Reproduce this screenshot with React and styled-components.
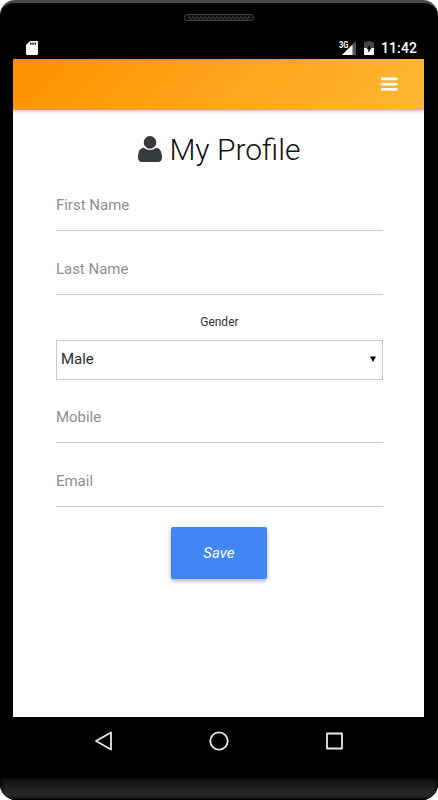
import { useState } from 'react'
import styled, { createGlobalStyle } from 'styled-components'

const GlobalStyle = createGlobalStyle`
  * {
    box-sizing: border-box;
  }
  body {
    margin: 0;
    background: white;
    font-family: Roboto, sans-serif;
  }
`

const Phone = styled.div`
  width: 438px;
  height: 800px;
  display: flex;
  flex-direction: column;
  background: black;
  border-top: 3px solid #4a4a4a;
  border-radius: 15px 15px 16px 16px;
  overflow: hidden;
`

const SpeakerArea = styled.div`
  height: 34px;
  display: flex;
  justify-content: center;
  padding-top: 11px;
`

const StatusBar = styled.div`
  height: 22px;
  display: flex;
  align-items: center;
  justify-content: space-between;
  padding: 0 21px 0 26px;
`

const StatusIcons = styled.div`
  display: flex;
  align-items: center;
  gap: 7px;
`

const Clock = styled.span`
  width: 36px;
  color: white;
  font-size: 14px;
  font-weight: 500;
  line-height: 20px;
  letter-spacing: 0.1px;
  white-space: nowrap;
`

const Screen = styled.div`
  width: 411px;
  height: 658px;
  margin-left: 13.4px;
  background: white;
`

const Header = styled.header`
  height: 51px;
  display: flex;
  align-items: center;
  justify-content: flex-end;
  padding-right: 26px;
  background: linear-gradient(135deg, #ff8f00, #ffb833);
  box-shadow: 0 1px 4px rgba(0, 0, 0, 0.28);
`

const MenuButton = styled.button`
  display: flex;
  padding: 0;
  margin-top: -1px;
  border: 0;
  background: none;
`

const Form = styled.form`
  padding: 20px 41.5px 0 42.5px;
`

const Title = styled.h1`
  display: flex;
  align-items: center;
  justify-content: center;
  gap: 7px;
  height: 40px;
  margin: 0 0 10px;
  color: #111;
  font-size: 30px;
  font-weight: 300;
  line-height: 40px;
  white-space: nowrap;
  svg {
    margin-top: -2px;
  }
`

const Field = styled.input`
  display: block;
  width: 100%;
  height: 51px;
  margin-bottom: ${props => props.$gap || '13px'};
  padding: 0 0 1px;
  border: 0;
  border-bottom: 1px solid #c8c8c8;
  outline: 0;
  background: none;
  color: #222;
  font-family: Roboto, sans-serif;
  font-size: 15px;
  &::placeholder {
    color: #8f8f8f;
  }
`

const Label = styled.label`
  display: block;
  height: 25px;
  color: #333;
  font-size: 12px;
  line-height: 14px;
  text-align: center;
`

const SelectBox = styled.div`
  display: flex;
  align-items: center;
  justify-content: space-between;
  height: 40px;
  margin-bottom: 12px;
  padding: 0 6px 2px 4px;
  border: 1px solid #cbcbcb;
  color: #2c2c2c;
  font-size: 15px;
`

const SaveButton = styled.button`
  display: block;
  width: 96px;
  height: 52px;
  margin: 0 auto 0 115px;
  padding: 0;
  border: 0;
  border-radius: 2px;
  background: #4285f4;
  box-shadow: 0 2px 4px rgba(0, 0, 0, 0.32);
  color: white;
  font-family: Roboto, sans-serif;
  font-size: 15px;
  font-style: italic;
`

const NavBar = styled.nav`
  height: 61px;
  display: flex;
  justify-content: center;
  gap: 91px;
  padding-top: 12px;
`

const Chin = styled.div`
  flex: 1;
  background: linear-gradient(#101010, #292929 75%, #151515);
  box-shadow: inset 0 -1px 2px black, inset 3px 0 4px -2px black, inset -3px 0 4px -2px black;
`

const Speaker = () => (
  <svg width="70" height="7" viewBox="0 0 70 7">
    <rect x="0.5" y="0.5" width="69" height="6" rx="3" fill="#111" stroke="#444" />
    <path d="M4 3.2H66" stroke="#555" strokeWidth="1" strokeDasharray="2 2" />
    <path d="M6 5H65" stroke="#4a4a4a" strokeWidth="1" strokeDasharray="2 2" />
  </svg>
)

const SdCard = () => (
  <svg width="12" height="15" viewBox="0 0 12 15">
    <path d="M4 0H11Q12 0 12 1V13Q12 14 11 14H1Q0 14 0 13V4Z" fill="white" />
    <path d="M4.8 1.5V3.8M7 1.5V3.8M9.3 1.5V3.8" stroke="black" strokeWidth="1.3" />
  </svg>
)

const Signal = () => (
  <svg width="18" height="15" viewBox="0 0 18 15">
    <path d="M3 14L17 0V14Z" fill="#555" />
    <path d="M3 14L13.5 3.5V14Z" fill="white" />
    <text x="0" y="6.5" fill="white" stroke="black" strokeWidth="1" paintOrder="stroke" fontSize="8.6" fontWeight="700" textLength="9.5" lengthAdjust="spacingAndGlyphs">3G</text>
  </svg>
)

const Battery = () => (
  <svg width="10" height="15" viewBox="0 0 10 15">
    <path d="M3 0H7V1H10V14H0V1H3Z" fill="#484848" />
    <path d="M0 7H10V14H0Z" fill="white" />
    <path d="M6 3.5L2.5 8.3H4.3V11.8L7.7 6.8H6Z" fill="black" />
  </svg>
)

const Bars = () => (
  <svg width="18" height="15" viewBox="0 0 18 15">
    <rect x="0.9" y="0.5" width="16.6" height="2.8" rx="1" fill="white" />
    <rect x="0.9" y="5.8" width="16.6" height="2.8" rx="1" fill="white" />
    <rect x="0.9" y="11" width="16.6" height="2.8" rx="1" fill="white" />
  </svg>
)

const User = () => (
  <svg width="24" height="26" viewBox="0 0 24 26" fill="#373a3c">
    <circle cx="12" cy="6.4" r="6.3" />
    <path d="M5.8 11.7Q8.6 14.1 12 14.1Q15.4 14.1 18.2 11.7C22.3 12 24 16.300 24 21.500C24 24.200 22.500 26 20.200 26H3.800C1.500 26 0 24.200 0 21.500C0 16.300 1.700 12 5.800 11.700Z" />
  </svg>
)

const NavIcon = ({ children }) => (
  <svg width="24" height="24" viewBox="0 0 24 24" fill="none" stroke="#e8e8e8" strokeWidth="1.8" strokeLinejoin="round">
    {children}
  </svg>
)

function App() {

  const [profile, setProfile] = useState({ first: '', last: '', mobile: '', email: '' })

  const field = (name) => ({
    value: profile[name],
    onChange: (e) => setProfile({ ...profile, [name]: e.target.value })
  })

  return (
    <>
      <GlobalStyle />
      <Phone>
        <SpeakerArea><Speaker /></SpeakerArea>
        <StatusBar>
          <SdCard />
          <StatusIcons>
            <Signal />
            <Battery />
            <Clock>11:42</Clock>
          </StatusIcons>
        </StatusBar>
        <Screen>
          <Header>
            <MenuButton><Bars /></MenuButton>
          </Header>
          <Form onSubmit={(e) => e.preventDefault()}>
            <Title><User />My Profile</Title>
            <Field placeholder='First Name' {...field('first')} />
            <Field placeholder='Last Name' $gap='20px' {...field('last')} />
            <Label>Gender</Label>
            <SelectBox>
              <span>Male</span>
              <svg width="6" height="6" viewBox="0 0 6 6"><path d="M0 0.5H6L3 6Z" fill="black" /></svg>
            </SelectBox>
            <Field placeholder='Mobile' {...field('mobile')} />
            <Field placeholder='Email' $gap='20px' {...field('email')} />
            <SaveButton>Save</SaveButton>
          </Form>
        </Screen>
        <NavBar>
          <NavIcon><path d="M4 12L19 3.5V20.5Z" /></NavIcon>
          <NavIcon><circle cx="12" cy="12" r="8.7" /></NavIcon>
          <NavIcon><rect x="5" y="4.5" width="15" height="15" /></NavIcon>
        </NavBar>
        <Chin />
      </Phone>
    </>
  );
}

export default App;
